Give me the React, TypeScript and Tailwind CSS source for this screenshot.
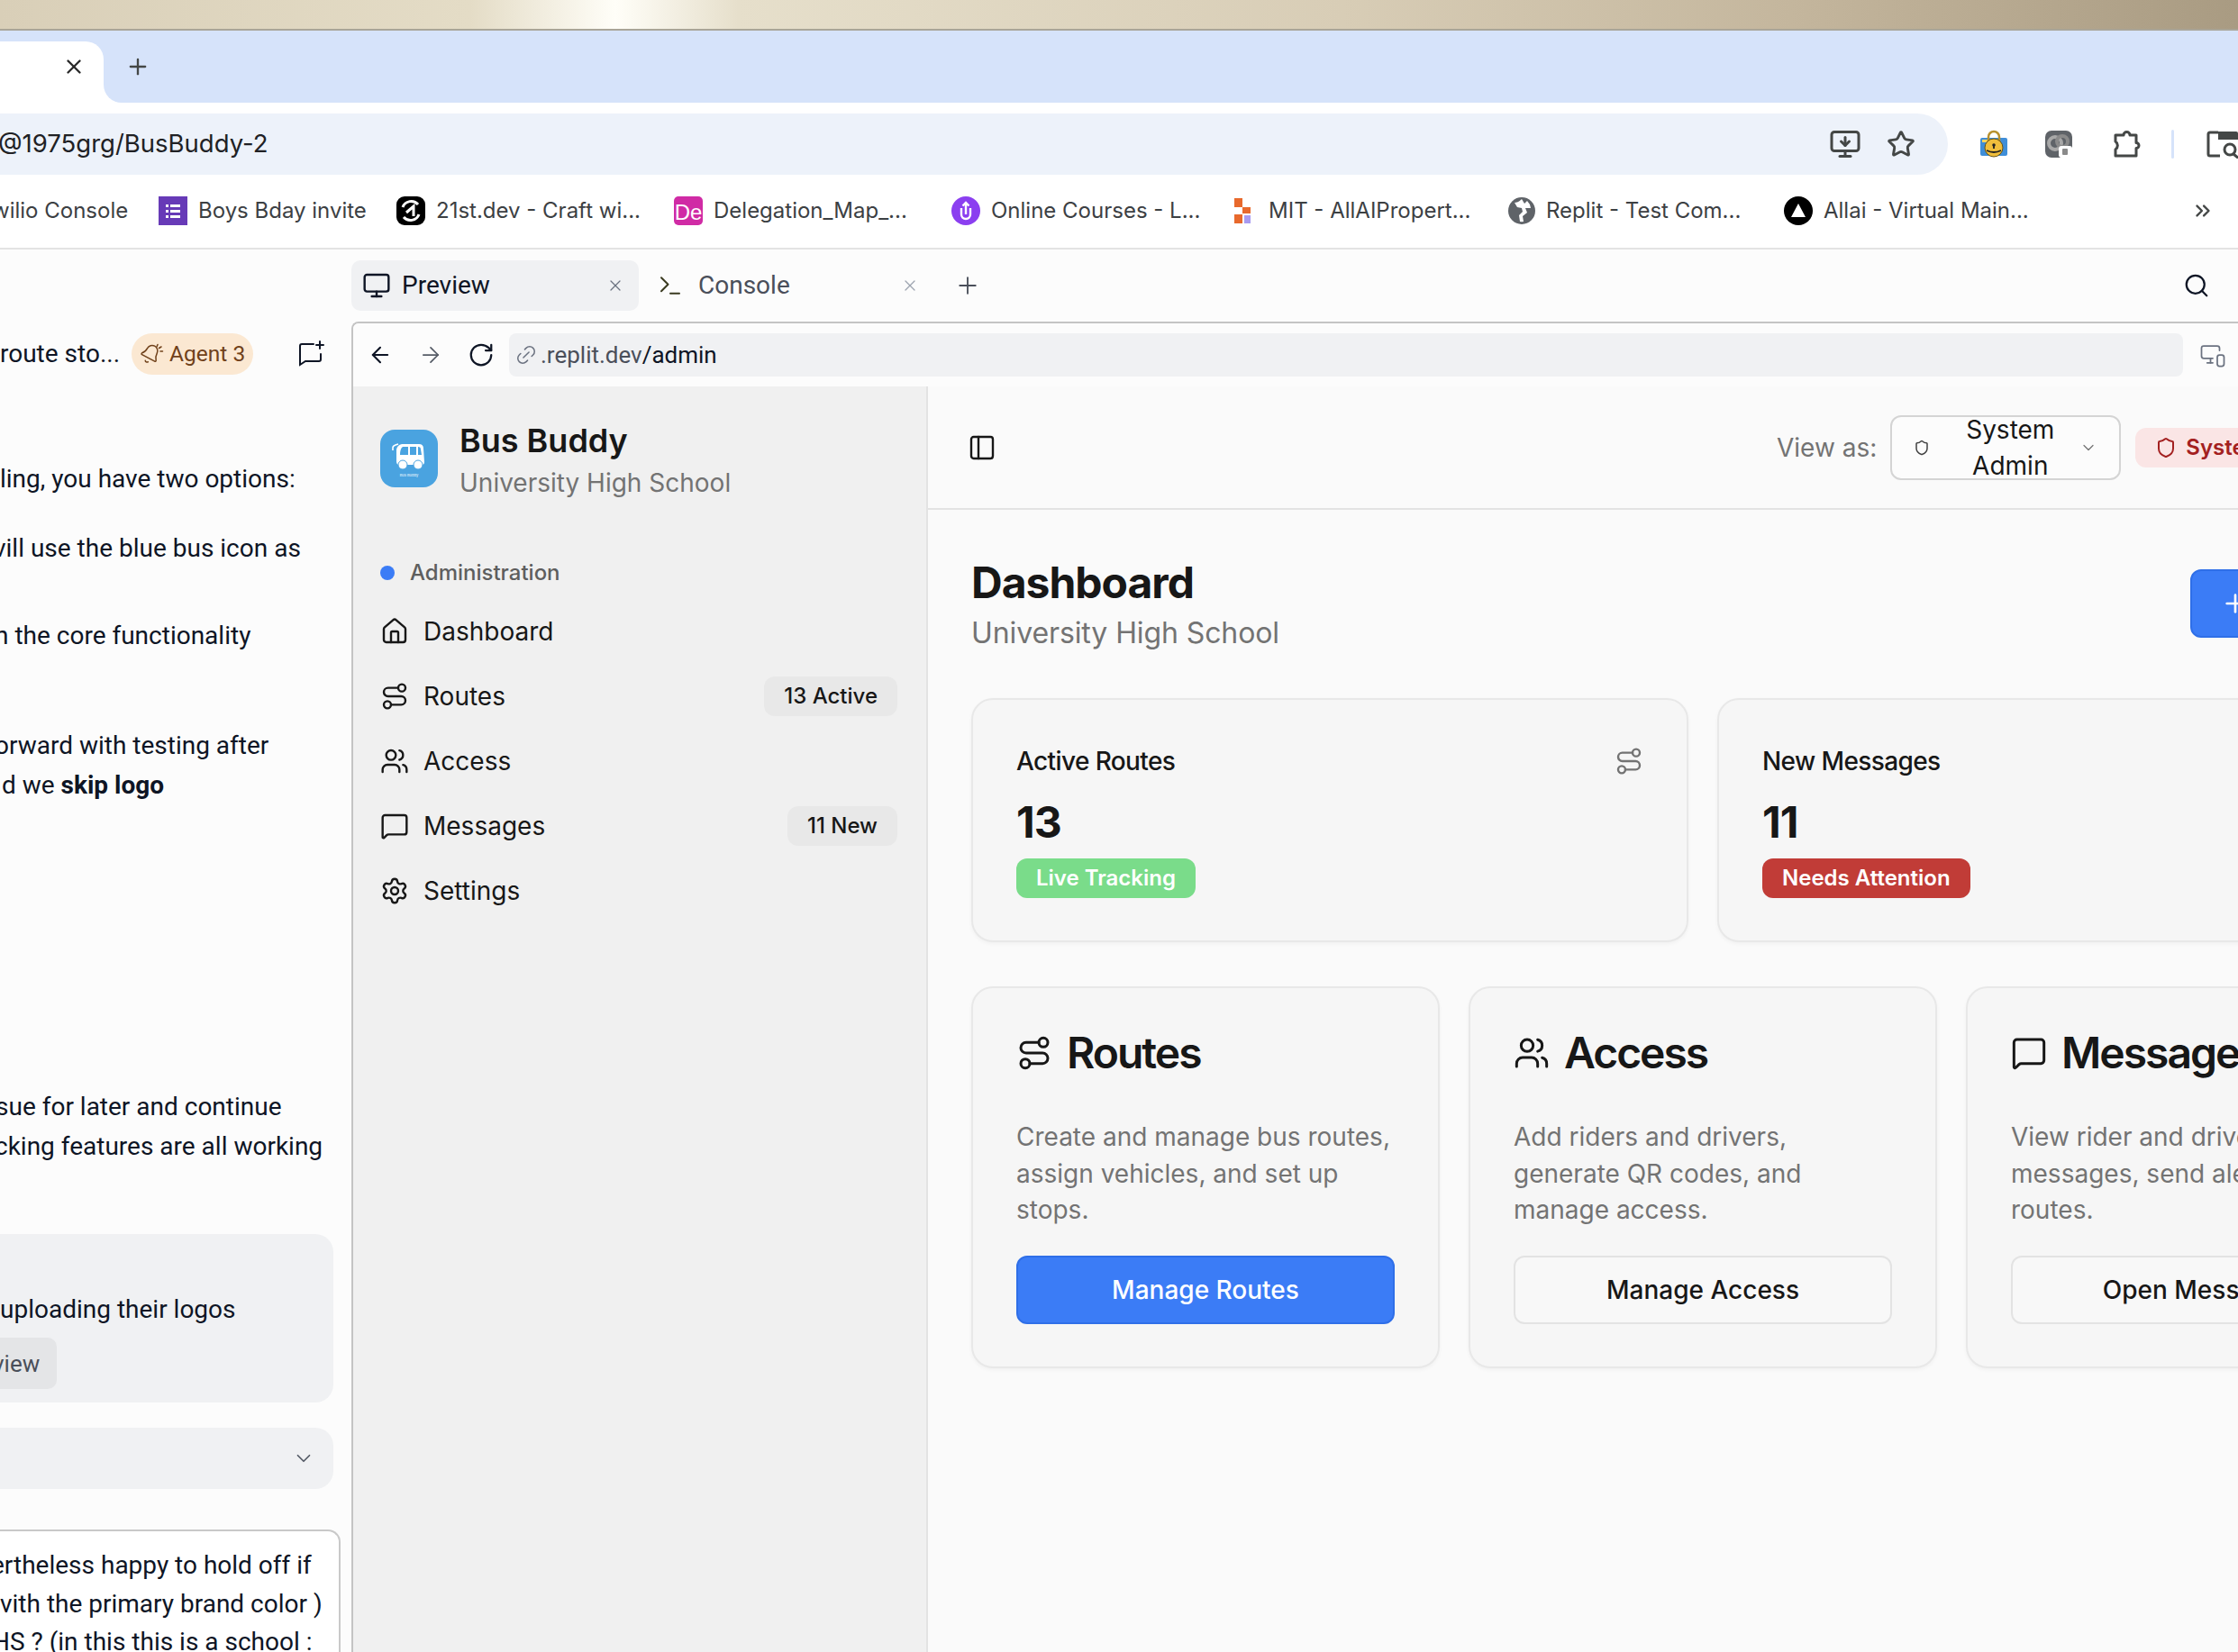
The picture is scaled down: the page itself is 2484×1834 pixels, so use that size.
import React from "react";
import {
  ArrowLeft, ArrowRight, ChevronDown, ChevronsRight, House, Link2, MessageSquare,
  Monitor, MonitorDown, MonitorSmartphone, PanelLeft, Plus, RotateCw, Route, Search, Settings, Shield, Star, Terminal, Users, X,
} from "lucide-react";

const plex = "font-['Roboto','Noto_Sans',sans-serif]";

function BusLogo() {
  return (
    <div className="w-[64px] h-[64px] mt-[12px] rounded-[16px] bg-[#4aa3e0] flex flex-col items-center justify-center shrink-0">
      <svg width="38" height="30" viewBox="0 0 38 30" className="mt-[3px]">
        <path d="M1 8 L1 5 Q1 3 4 2 L7 1" fill="none" stroke="#fff" strokeWidth="1.6" />
        <path d="M5 7 Q6 2 11 1 L30 1 Q35 1 35 6 L36 21 Q36 24 33 24 L8 24 Q5 24 5 20 Z" fill="#fff" />
        <path d="M12 4 L18 4 L18 13 L9 13 Q9 6 12 4 Z M20 4 L27 4 L27 13 L20 13 Z M29 4 Q32 4 32 7 L33 13 L29 13 Z" fill="#4aa3e0" />
        <circle cx="12" cy="24" r="5" fill="#fff" stroke="#4aa3e0" strokeWidth="1" />
        <circle cx="29" cy="24" r="5" fill="#fff" stroke="#4aa3e0" strokeWidth="1" />
      </svg>
      <span className="text-[4px] leading-[5px] mt-[3px] text-white/80 font-medium">Bus Buddy</span>
    </div>
  );
}

function SheetIcon() {
  return (
    <svg width="32" height="32" viewBox="0 0 32 32">
      <rect width="32" height="32" fill="#673ab7" />
      <path d="M8 9h3v3H8zM13 9h11v3H13zM8 15h3v3H8zM13 15h11v3H13zM8 21h3v3H8zM13 21h11v3H13z" fill="#fff" />
    </svg>
  );
}
function TwentyOneIcon() {
  return (
    <svg width="32" height="32" viewBox="0 0 32 32">
      <rect width="32" height="32" rx="9" fill="#000" />
      <path d="M7 12a10 10 0 0 1 17-3M25 20a10 10 0 0 1-17 3" stroke="#fff" strokeWidth="3" fill="none" />
      <path d="M11 18l8-7v11" stroke="#fff" strokeWidth="3" fill="none" />
    </svg>
  );
}
function DeIcon() {
  return (
    <div className="w-[32px] h-[32px] rounded-[5px] bg-[#d02ba5] flex items-end justify-center text-white text-[24px] leading-[28px] font-normal font-['Liberation_Sans',sans-serif]">De</div>
  );
}
function UIcon() {
  return (
    <svg width="32" height="32" viewBox="0 0 32 32">
      <circle cx="16" cy="16" r="16" fill="#8b3ff0" />
      <path d="M11 13v7a5 5 0 0 0 10 0v-7" stroke="#fff" strokeWidth="2.4" fill="none" />
      <path d="M16 7v13M12.5 10.5L16 7l3.500 3.500" stroke="#fff" strokeWidth="2.400" fill="none" />
    </svg>
  );
}
function MitIcon() {
  return (
    <svg width="32" height="32" viewBox="0 0 32 32">
      <rect x="3" y="2" width="9" height="10" fill="#e8692c" />
      <rect x="12" y="12" width="9" height="7" fill="#e8692c" />
      <rect x="3" y="20" width="9" height="10" fill="#e8692c" />
      <rect x="14" y="21" width="7" height="9" fill="#a89bf0" />
    </svg>
  );
}
function GlobeIcon() {
  return (
    <svg width="32" height="32" viewBox="0 0 32 32">
      <circle cx="16" cy="16" r="15" fill="#5f6368" />
      <path d="M16 3c-3 3-6 4-8 4l3 5 5 1 1 4-4 4 1 7a13 13 0 0 0 4 0l-1-6 5-4-2-5h6a13 13 0 0 0-4-8l-3 3z" fill="#fff" />
    </svg>
  );
}
function AllaiIcon() {
  return (
    <svg width="32" height="32" viewBox="0 0 32 32">
      <circle cx="16" cy="16" r="16" fill="#000" />
      <path d="M16 8L24 23H8Z" fill="#fff" />
    </svg>
  );
}
function LockExtIcon() {
  return (
    <svg width="32" height="32" viewBox="0 0 32 32" className="shrink-0">
      <rect x="1" y="9" width="30" height="20" rx="2" fill="#3f8ed8" />
      <rect x="3" y="11" width="7" height="3" fill="#f4d35e" />
      <path d="M10 15V8a6 6 0 0 1 12 0v7" fill="none" stroke="#b8912d" strokeWidth="2.500" />
      <circle cx="16" cy="20" r="10" fill="#f0be3c" stroke="#6a5310" strokeWidth="1" />
      <circle cx="16" cy="17" r="1.800" fill="#222" />
      <path d="M16 17v4M8 23q8 4 16 0" stroke="#222" strokeWidth="1.800" fill="none" />
    </svg>
  );
}
function LoomExtIcon() {
  return (
    <svg width="32" height="32" viewBox="0 0 32 32">
      <rect width="30" height="30" x="1" y="1" rx="7" fill="#5f6368" />
      <circle cx="12" cy="15" r="7" fill="none" stroke="#a8a8a8" strokeWidth="4" />
      <circle cx="20" cy="13" r="6" fill="none" stroke="#8a8a8a" strokeWidth="4" />
      <rect x="16" y="18" width="15" height="13" rx="3" fill="#fff" />
      <rect x="20" y="21" width="6" height="7" rx="1" fill="#8a8a8a" />
    </svg>
  );
}
function PuzzleExtIcon() {
  return (
    <svg width="32" height="34" viewBox="0 0 32 34" className="ml-[44px] shrink-0">
      <path
        d="M3 7h9a3.500 3.500 0 0 1 7 0h7v8.500a3 3 0 0 1 0 6V30H3v-7a5.500 5.500 0 0 0 0-9z"
        fill="none"
        stroke="#444746"
        strokeWidth="3"
        strokeLinejoin="round"
      />
    </svg>
  );
}
function SplitSearchIcon() {
  return (
    <svg width="40" height="32" viewBox="0 0 40 32">
      <path d="M14 3H5a2 2 0 0 0-2 2v22a2 2 0 0 0 2 2h11" stroke="#444746" strokeWidth="3" fill="none" />
      <path d="M14 2h20a2 2 0 0 1 2 2v7H14z" fill="#444746" />
      <circle cx="27" cy="22" r="6" stroke="#444746" strokeWidth="3" fill="none" />
      <path d="M31 27l6 5" stroke="#444746" strokeWidth="3" />
    </svg>
  );
}
function NewChatIcon() {
  return (
    <svg width="34" height="34" viewBox="0 0 34 34" fill="none" stroke="#0e1525" strokeWidth="2" strokeLinecap="round" className="ml-[47px] shrink-0">
      <path d="M20 6H7a2 2 0 0 0-2 2v21l6-4h15a2 2 0 0 0 2-2v-6" />
      <path d="M27 3v8M23 7h8" />
    </svg>
  );
}
function AgentBellIcon() {
  return (
    <svg width="26" height="26" viewBox="0 0 26 26" fill="none" stroke="currentColor" strokeWidth="1.500" strokeLinecap="round" strokeLinejoin="round" className="shrink-0">
      <g transform="rotate(28 11 13) translate(-1 1)">
        <path d="M10.268 21a2 2 0 0 0 3.464 0" />
        <path d="M3.262 15.326A1 1 0 0 0 4 17h16a1 1 0 0 0 .74-1.673C19.41 13.956 18 12.499 18 8A6 6 0 0 0 6 8c0 4.499-1.411 5.956-2.738 7.326" />
      </g>
      <path d="M19 2.500l-1 2.500M23 5l-2.500 1.500M24.500 10l-2.500 0" />
    </svg>
  );
}

function Bookmark({ icon, label, className }: { icon: React.ReactNode; label: string; className: string }) {
  return (
    <div className={`flex items-center shrink-0 ${className}`}>
      <span className="shrink-0 w-[32px] h-[32px] flex items-center justify-center">{icon}</span>
      <span className="whitespace-nowrap">{label}</span>
    </div>
  );
}

function NavItem({ icon, label, badge }: { icon: React.ReactNode; label: string; badge?: string }) {
  return (
    <div className="h-[72px] flex items-center text-[28px] text-[#171717]">
      <span className="w-[48px] shrink-0 flex items-center text-[#171717]">{icon}</span>
      <span>{label}</span>
      {badge ? (
        <span className="ml-auto h-[44px] px-[22px] rounded-[12px] bg-[#e8e8e8] text-[24px] font-medium flex items-center">{badge}</span>
      ) : null}
    </div>
  );
}

function StatCard({ title, value, badge, badgeClass, icon }: { title: string; value: string; badge: string; badgeClass: string; icon?: React.ReactNode }) {
  return (
    <div className="h-[271px] rounded-[24px] border-2 border-[#e8e8e8] bg-[#f6f6f6] shadow-[0_2px_4px_rgba(0,0,0,0.04)] px-[48px] pt-[48px]">
      <div className="flex items-center justify-between h-[40px] text-[28px] font-medium text-[#171717] tracking-[-0.6px]">
        <span>{title}</span>
        {icon}
      </div>
      <div className="mt-[20px] h-[56px] text-[48px] leading-[56px] font-bold text-[#171717] tracking-[-1px]">{value}</div>
      <div className={`mt-[12px] h-[44px] w-fit px-[22px] rounded-[12px] text-[24px] font-semibold flex items-center ${badgeClass}`}>{badge}</div>
    </div>
  );
}

function FeatureCard({ icon, title, lines, button, primary }: { icon: React.ReactNode; title: string; lines: string[]; button: string; primary?: boolean }) {
  return (
    <div className="h-[424px] rounded-[24px] border-2 border-[#e8e8e8] bg-[#f6f6f6] shadow-[0_2px_4px_rgba(0,0,0,0.04)] px-[48px] pt-[44px] overflow-hidden">
      <div className="flex items-center h-[56px] gap-[16px] text-[48px] font-semibold text-[#171717] tracking-[-2px] whitespace-nowrap">
        {icon}
        <span>{title}</span>
      </div>
      <div className="mt-[45px] text-[28px] leading-[40.500px] text-[#737373] whitespace-nowrap">
        {lines.map((l) => (
          <div key={l}>{l}</div>
        ))}
      </div>
      <div
        className={
          primary
            ? "mt-[30px] h-[76px] w-[420px] rounded-[12px] bg-[#3b7cf6] border-2 border-[#2f6fe8] text-white text-[28px] font-medium flex items-center justify-center"
            : "mt-[30px] h-[76px] w-[420px] rounded-[12px] bg-[#f8f8f8] border-2 border-[#e3e3e3] text-[#171717] text-[28px] font-medium flex items-center justify-center"
        }
      >
        {button}
      </div>
    </div>
  );
}

export default function App() {
  return (
    <div className="w-[2484px] h-[1834px] overflow-hidden flex flex-col bg-white font-['Inter',sans-serif]">
      {/* wallpaper */}
      <div className="h-[34px] shrink-0 border-b-2 border-[#a9a598] bg-[linear-gradient(90deg,#d9cfb8_0%,#e4dcc6_21%,#fffef8_27.500%,#e6dfcb_33%,#d8cdb6_60%,#c4b69d_80%,#a99b82_100%)]" />
      {/* tab strip */}
      <div className="h-[80px] shrink-0 bg-[#d6e3fa] flex items-end">
        <div className="w-[115px] h-[68px] bg-white rounded-tr-[20px] flex items-center justify-end pr-[20px] pb-[12px]">
          <X size={26} strokeWidth={2.2} className="text-[#2a2a2a]" />
        </div>
        <div className="w-[20px] h-[20px] bg-white shrink-0">
          <div className="w-[20px] h-[20px] bg-[#d6e3fa] rounded-bl-[20px]" />
        </div>
        <div className="h-[68px] flex items-center ml-[4px] pb-[12px]">
          <Plus size={28} strokeWidth={2} className="text-[#444746]" />
        </div>
      </div>
      {/* toolbar */}
      <div className="h-[92px] shrink-0 bg-white pt-[12px] flex items-start overflow-hidden">
        <div className="w-[2162px] shrink-0 h-[68px] rounded-r-[34px] bg-[#edf2fa] flex items-center text-[27.500px] text-[#202124] pr-[16px]">
          <span className="-ml-[2px]">@1975grg/BusBuddy-2</span>
          <span className="ml-auto flex items-center gap-[28px] text-[#444746] pr-[20px]">
            <MonitorDown size={36} strokeWidth={2} />
            <Star size={32} strokeWidth={2.2} />
          </span>
        </div>
        <div className="h-[68px] shrink-0 flex items-center ml-[35px]">
          <LockExtIcon />
          <span className="ml-[40px]"><LoomExtIcon /></span>
          <PuzzleExtIcon />
          <span className="ml-[33px] w-[3px] h-[32px] rounded bg-[#d6e3fa]" />
          <span className="ml-[35px] shrink-0"><SplitSearchIcon /></span>
        </div>
      </div>
      {/* bookmarks */}
      <div className="h-[71px] shrink-0 bg-white border-b-2 border-[#e3e3e3] flex items-center pb-[13px] text-[24px] text-[#3c4043]">
        <div className="w-[176px] shrink-0 whitespace-nowrap -ml-[9px] mr-[9px]">wilio Console</div>
        <Bookmark className="w-[264px] gap-[12px]" icon={<SheetIcon />} label="Boys Bday invite" />
        <Bookmark className="w-[308px] gap-[12px]" icon={<TwentyOneIcon />} label="21st.dev - Craft wi..." />
        <Bookmark className="w-[308px] gap-[12px]" icon={<DeIcon />} label="Delegation_Map_..." />
        <Bookmark className="w-[311px] gap-[12px]" icon={<UIcon />} label="Online Courses - L..." />
        <Bookmark className="w-[306px] gap-[9px]" icon={<MitIcon />} label="MIT - AllAIPropert..." />
        <Bookmark className="w-[307px] gap-[11px]" icon={<GlobeIcon />} label="Replit - Test Com..." />
        <Bookmark className="w-[452px] gap-[12px]" icon={<AllaiIcon />} label="Allai - Virtual Main..." />
        <ChevronsRight size={26} strokeWidth={2.2} className="text-[#444746]" />
      </div>

      {/* replit workspace */}
      <div className="flex-1 min-h-0 flex bg-[#fcfcfc]">
        {/* chat pane */}
        <div className={`w-[390px] shrink-0 overflow-hidden text-[28px] leading-[44px] text-[#0e1525] whitespace-nowrap ${plex}`}>
          <div className="mt-[93px] h-[46px] flex items-center">
            <span>route sto...</span>
            <span className="ml-[13px] h-[46px] w-[135px] shrink-0 rounded-full bg-[#fbe8d2] text-[#70411a] text-[24.500px] flex items-center pl-[10px] gap-[6px]">
              <AgentBellIcon />
              Agent 3
            </span>
            <NewChatIcon />
          </div>
          <div className="mt-[94px]">ling, you have two options:</div>
          <div className="mt-[33px] -ml-[7px]">vill use the blue bus icon as</div>
          <div className="mt-[53px] -ml-[6px]">n the core functionality</div>
          <div className="mt-[78px] -ml-[6px]">orward with testing after</div>
          <div className="ml-[2px]">d we <b className="font-bold">skip logo</b></div>
          <div className="mt-[313px] -ml-[5px]">sue for later and continue</div>
          <div className="-ml-[6px]">cking features are all working</div>
          <div className="mt-[75px] w-[370px] h-[187px] rounded-r-[20px] bg-[#f0f1f3] pt-[62px]">
            <div>uploading their logos</div>
            <div className="mt-[9px] w-[63px] h-[57px] rounded-r-[10px] bg-[#e4e5e7] text-[#4a4f5a] text-[26px] flex items-center">
              <span className="-ml-[8px]">view</span>
            </div>
          </div>
          <div className="mt-[28px] w-[370px] h-[68px] rounded-r-[20px] bg-[#f0f1f3] flex items-center justify-end pr-[20px]">
            <ChevronDown size={26} strokeWidth={1.6} className="text-[#555b66]" />
          </div>
          <div className="mt-[45px] w-[378px] h-[160px] rounded-tr-[14px] border-t-2 border-r-2 border-[#c9c9c9] bg-white pt-[16px]">
            <div className="-ml-[10px]">ertheless happy to hold off if</div>
            <div className="leading-[42px]">vith the primary brand color )</div>
            <div className="leading-[42px] -ml-[9px]">HS ? (in this this is a school :</div>
          </div>
        </div>

        {/* right column */}
        <div className="flex-1 min-w-0 flex flex-col">
          {/* preview tabs */}
          <div className={`h-[80px] shrink-0 flex items-center text-[28px] ${plex}`}>
            <div className="w-[319px] h-[56px] rounded-[10px] bg-[#f0f1f3] flex items-center pl-[12px] pr-[16px] text-[#0e1525]">
              <Monitor size={32} strokeWidth={1.8} />
              <span className="ml-[12px]">Preview</span>
              <X size={20} strokeWidth={1.5} className="ml-auto text-[#6b7280]" />
            </div>
            <div className="w-[319px] h-[56px] flex items-center pl-[20px] pr-[8px] text-[#4a4f5a]">
              <Terminal size={30} strokeWidth={1.6} className="text-[#3a3a20]" />
              <span className="ml-[16px]">Console</span>
              <X size={20} strokeWidth={1.5} className="ml-auto text-[#9ca3af]" />
            </div>
            <Plus size={30} strokeWidth={1.5} className="ml-[31px] text-[#4a4f5a]" />
            <Search size={30} strokeWidth={1.8} className="ml-auto mr-[31px] text-[#0e1525]" />
          </div>
          {/* preview panel */}
          <div className="flex-1 min-h-0 flex flex-col rounded-tl-[8px] border-t-2 border-l-2 border-[#c4c4c4] overflow-hidden">
            <div className="h-[70px] shrink-0 bg-[#fcfcfc] flex items-center">
              <ArrowLeft size={28} strokeWidth={1.8} className="ml-[16px] text-[#0e1525]" />
              <ArrowRight size={28} strokeWidth={1.5} className="ml-[28px] text-[#555b66]" />
              <RotateCw size={30} strokeWidth={1.8} className="ml-[27px] text-[#0e1525]" />
              <div className={`ml-[16px] w-[1858px] h-[48px] rounded-[8px] bg-[#f0f1f3] flex items-center pl-[6px] text-[26px] ${plex}`}>
                <Link2 size={26} strokeWidth={1.4} className="-rotate-45 text-[#6b7280]" />
                <span className="ml-[3px] text-[#4a4f5a]">.replit.dev</span>
                <span className="text-[#0e1525]">/admin</span>
              </div>
              <MonitorSmartphone size={30} strokeWidth={1.4} className="ml-[18px] shrink-0 text-[#6b7280]" />
            </div>
            <div className="flex-1 min-h-0 flex">
              {/* sidebar */}
              <div className="w-[638px] shrink-0 bg-[#f0f0f0] border-r-2 border-[#e3e3e3] pl-[30px] pr-[32px]">
                <div className="mt-[36px] flex items-start gap-[24px]">
                  <BusLogo />
                  <div>
                    <div className="text-[36px] leading-[48px] font-semibold text-[#171717]">Bus Buddy</div>
                    <div className="text-[28px] leading-[40px] text-[#737373] mt-[3px]">University High School</div>
                  </div>
                </div>
                <div className="mt-[60px] h-[40px] flex items-center text-[24px] font-medium text-[#5e5e5e]">
                  <span className="w-[16px] h-[16px] rounded-full bg-[#3b7cf6] mr-[17px]" />
                  Administration
                </div>
                <div className="mt-[9px]">
                  <NavItem icon={<House size={32} strokeWidth={1.8} />} label="Dashboard" />
                  <NavItem icon={<Route size={32} strokeWidth={1.8} />} label="Routes" badge="13 Active" />
                  <NavItem icon={<Users size={32} strokeWidth={1.8} />} label="Access" />
                  <NavItem icon={<MessageSquare size={32} strokeWidth={1.8} />} label="Messages" badge="11 New" />
                  <NavItem icon={<Settings size={32} strokeWidth={1.8} />} label="Settings" />
                </div>
              </div>
              {/* main */}
              <div className="flex-1 min-w-0 bg-[#fafafa] overflow-hidden">
                <div className="w-[1720px]">
                  <div className="h-[137px] border-b-2 border-[#e3e3e3] flex items-center pl-[44px]">
                    <PanelLeft size={32} strokeWidth={1.8} className="text-[#171717] shrink-0" />
                    <span className="ml-[866px] text-[28px] text-[#737373] whitespace-nowrap">View as:</span>
                    <div className="ml-[15px] w-[256px] h-[72px] rounded-[12px] border-2 border-[#d4d4d4] bg-[#fcfcfc] flex items-center px-[24px] text-[28px] leading-[40px] text-[#171717] shrink-0">
                      <Shield size={18} strokeWidth={2} className="shrink-0 text-[#404040]" />
                      <span className="flex-1 text-center pl-[12px]">System Admin</span>
                      <ChevronDown size={20} strokeWidth={1.5} className="shrink-0 text-[#737373]" />
                    </div>
                    <div className="ml-[16px] h-[44px] rounded-[12px] bg-[#fae5e5] text-[#a32020] text-[24px] font-semibold flex items-center pl-[22px] pr-[22px] gap-[10px] whitespace-nowrap shrink-0">
                      <Shield size={24} strokeWidth={2} />
                      System Admin
                    </div>
                  </div>
                  <div className="px-[48px]">
                    <div className="mt-[49px] flex items-center justify-between">
                      <div>
                        <div className="text-[48px] leading-[64px] font-bold text-[#171717] tracking-[-1px]">Dashboard</div>
                        <div className="text-[32px] leading-[44px] mt-[2px] text-[#737373] tracking-[-0.1px]">University High School</div>
                      </div>
                      <div className="w-[269px] h-[76px] rounded-[12px] bg-[#3b7cf6] border-2 border-[#2f6fe8] text-white flex items-center pl-[32px] -translate-x-[2px]">
                        <Plus size={32} strokeWidth={2} />
                      </div>
                    </div>
                    <div className="mt-[50px] grid grid-cols-2 gap-[32px]">
                      <StatCard
                        title="Active Routes"
                        value="13"
                        badge="Live Tracking"
                        badgeClass="bg-[#7adc8a] text-white"
                        icon={<Route size={32} strokeWidth={1.8} className="text-[#737373]" />}
                      />
                      <StatCard title="New Messages" value="11" badge="Needs Attention" badgeClass="bg-[#c13c37] text-white" />
                    </div>
                    <div className="mt-[49px] grid grid-cols-3 gap-[32px]">
                      <FeatureCard
                        icon={<Route size={40} strokeWidth={1.8} />}
                        title="Routes"
                        lines={["Create and manage bus routes,", "assign vehicles, and set up", "stops."]}
                        button="Manage Routes"
                        primary
                      />
                      <FeatureCard
                        icon={<Users size={40} strokeWidth={1.8} />}
                        title="Access"
                        lines={["Add riders and drivers,", "generate QR codes, and", "manage access."]}
                        button="Manage Access"
                      />
                      <FeatureCard
                        icon={<MessageSquare size={40} strokeWidth={1.8} />}
                        title="Messages"
                        lines={["View rider and driver", "messages, send alerts for", "routes."]}
                        button="Open Messages"
                      />
                    </div>
                  </div>
                </div>
              </div>
            </div>
          </div>
        </div>
      </div>
    </div>
  );
}
